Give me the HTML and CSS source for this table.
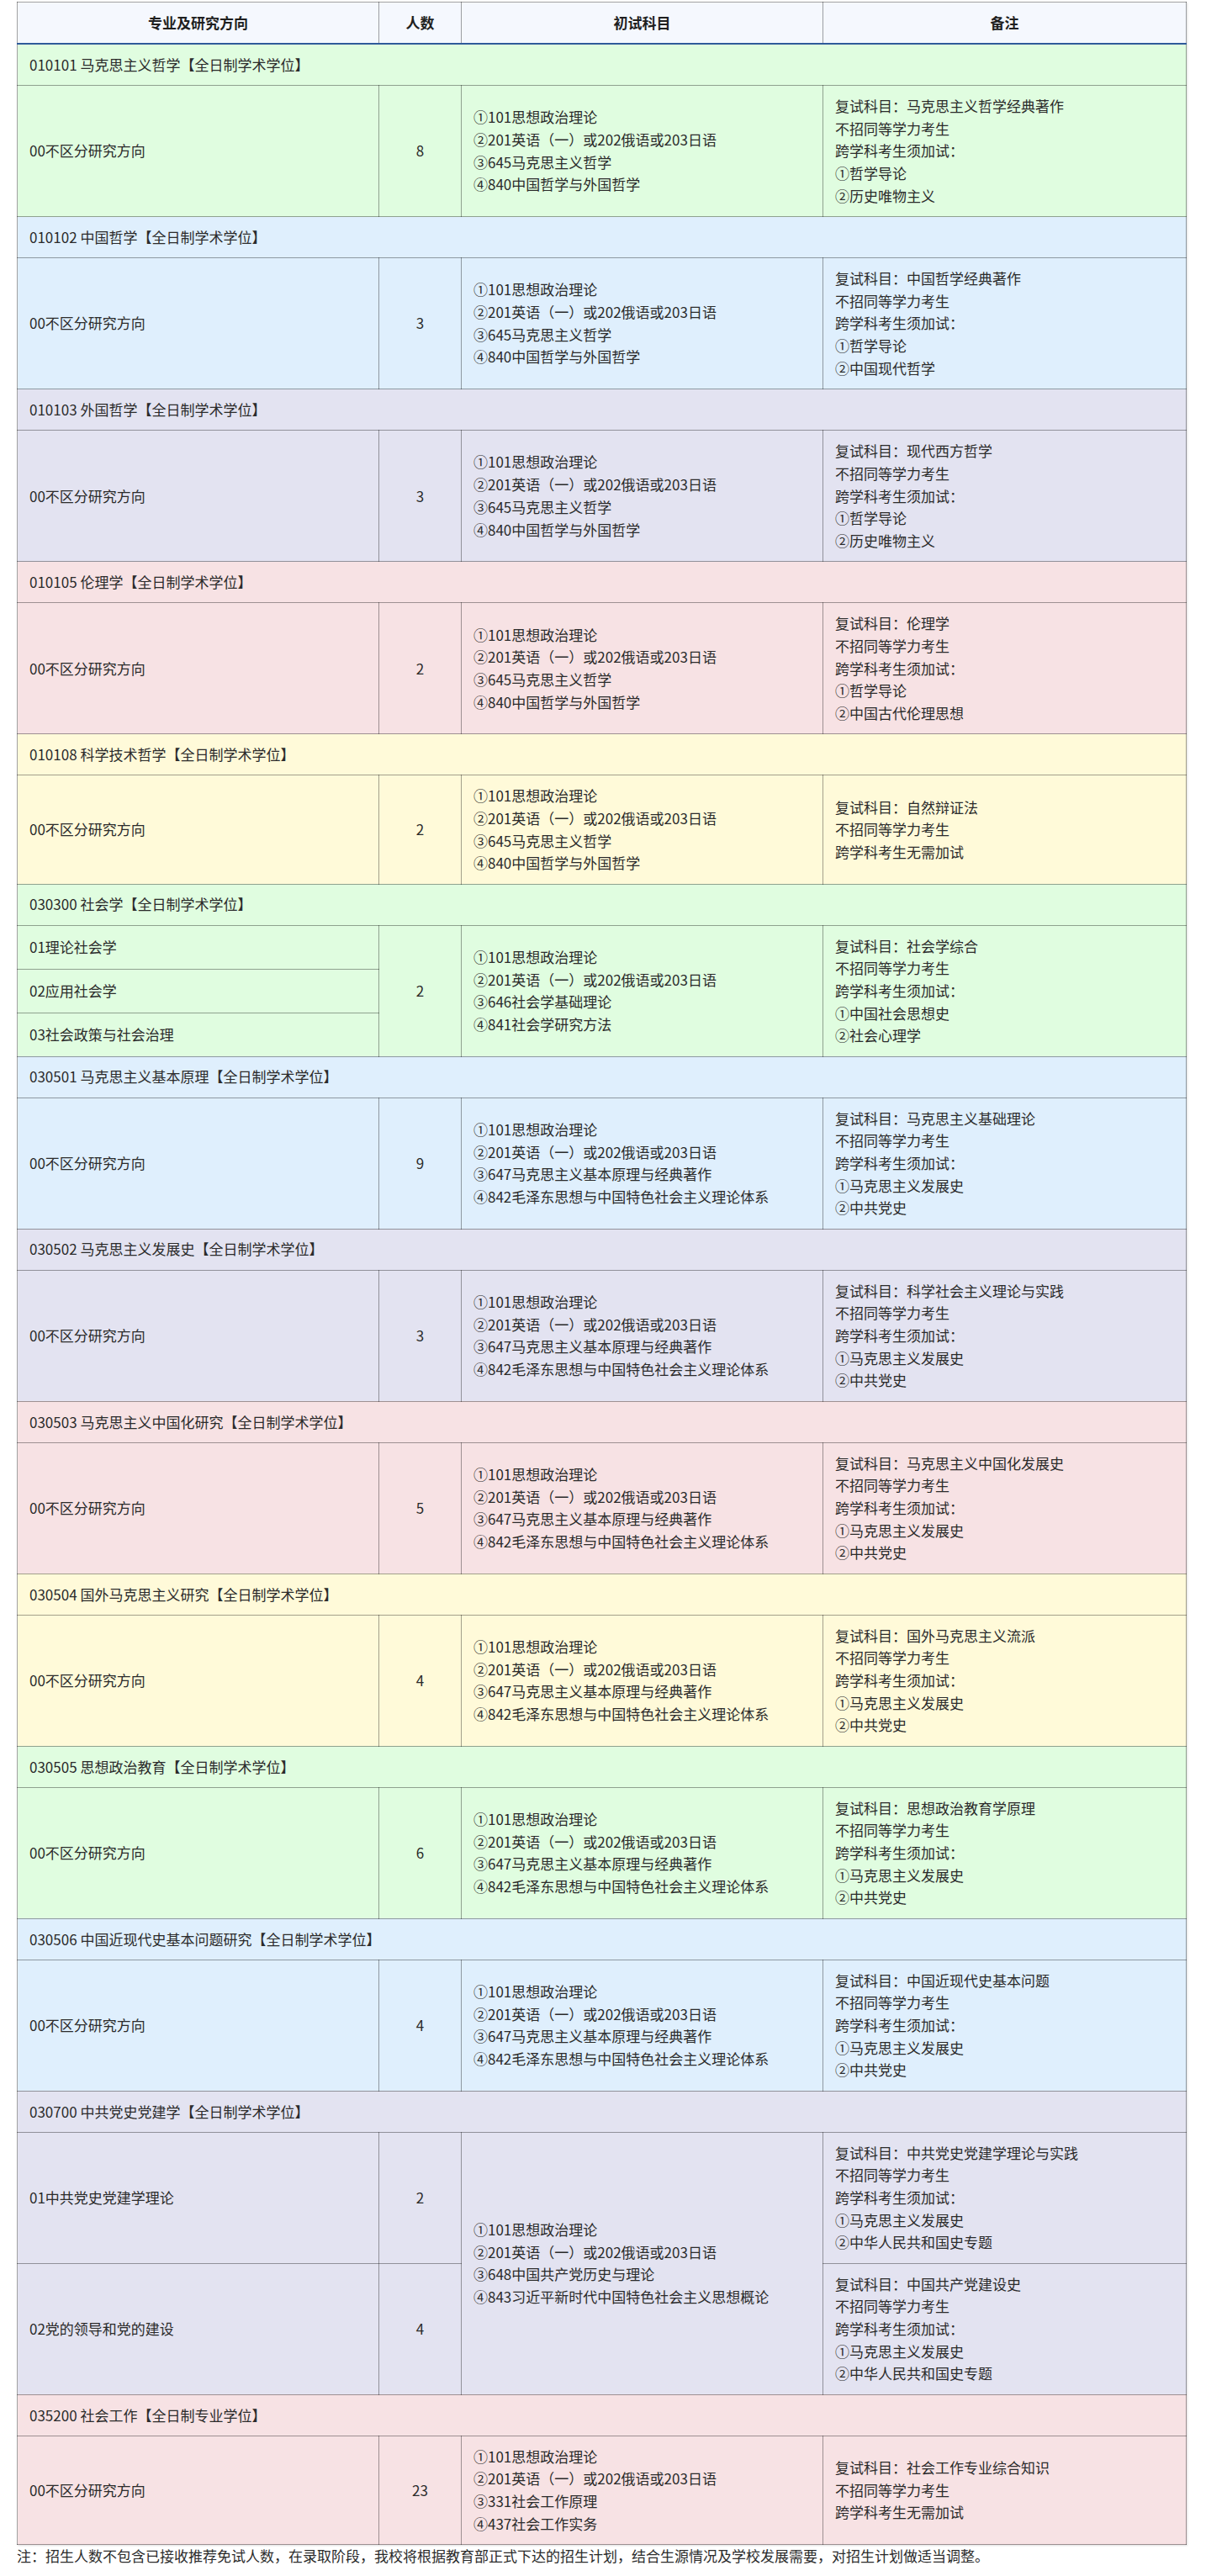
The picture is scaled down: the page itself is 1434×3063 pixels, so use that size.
FILE: index.html
```html
<!DOCTYPE html>
<html lang="zh-CN">
<head>
<meta charset="utf-8">
<title>招生专业目录</title>
<link rel="stylesheet" href="styles.css">
</head>
<body>
<div class="page">
<table class="plan">
<colgroup>
<col class="c-major"><col class="c-num"><col class="c-subj"><col class="c-note">
</colgroup>
<thead>
<tr><th>专业及研究方向</th><th>人数</th><th>初试科目</th><th>备注</th></tr>
</thead>
<tbody class="green">
<tr class="grp"><td colspan="4">010101 马克思主义哲学【全日制学术学位】</td></tr>
<tr><td>00不区分研究方向</td><td class="num">8</td>
<td>①101思想政治理论<br>②201英语（一）或202俄语或203日语<br>③645马克思主义哲学<br>④840中国哲学与外国哲学</td>
<td>复试科目：马克思主义哲学经典著作<br>不招同等学力考生<br>跨学科考生须加试：<br>①哲学导论<br>②历史唯物主义</td></tr>
</tbody>
<tbody class="blue">
<tr class="grp"><td colspan="4">010102 中国哲学【全日制学术学位】</td></tr>
<tr><td>00不区分研究方向</td><td class="num">3</td>
<td>①101思想政治理论<br>②201英语（一）或202俄语或203日语<br>③645马克思主义哲学<br>④840中国哲学与外国哲学</td>
<td>复试科目：中国哲学经典著作<br>不招同等学力考生<br>跨学科考生须加试：<br>①哲学导论<br>②中国现代哲学</td></tr>
</tbody>
<tbody class="lav">
<tr class="grp"><td colspan="4">010103 外国哲学【全日制学术学位】</td></tr>
<tr><td>00不区分研究方向</td><td class="num">3</td>
<td>①101思想政治理论<br>②201英语（一）或202俄语或203日语<br>③645马克思主义哲学<br>④840中国哲学与外国哲学</td>
<td>复试科目：现代西方哲学<br>不招同等学力考生<br>跨学科考生须加试：<br>①哲学导论<br>②历史唯物主义</td></tr>
</tbody>
<tbody class="pink">
<tr class="grp"><td colspan="4">010105 伦理学【全日制学术学位】</td></tr>
<tr><td>00不区分研究方向</td><td class="num">2</td>
<td>①101思想政治理论<br>②201英语（一）或202俄语或203日语<br>③645马克思主义哲学<br>④840中国哲学与外国哲学</td>
<td>复试科目：伦理学<br>不招同等学力考生<br>跨学科考生须加试：<br>①哲学导论<br>②中国古代伦理思想</td></tr>
</tbody>
<tbody class="yellow">
<tr class="grp"><td colspan="4">010108 科学技术哲学【全日制学术学位】</td></tr>
<tr><td>00不区分研究方向</td><td class="num">2</td>
<td>①101思想政治理论<br>②201英语（一）或202俄语或203日语<br>③645马克思主义哲学<br>④840中国哲学与外国哲学</td>
<td>复试科目：自然辩证法<br>不招同等学力考生<br>跨学科考生无需加试</td></tr>
</tbody>
<tbody class="green">
<tr class="grp"><td colspan="4">030300 社会学【全日制学术学位】</td></tr>
<tr><td>01理论社会学</td><td class="num" rowspan="3">2</td>
<td rowspan="3">①101思想政治理论<br>②201英语（一）或202俄语或203日语<br>③646社会学基础理论<br>④841社会学研究方法</td>
<td rowspan="3">复试科目：社会学综合<br>不招同等学力考生<br>跨学科考生须加试：<br>①中国社会思想史<br>②社会心理学</td></tr>
<tr><td>02应用社会学</td></tr>
<tr><td>03社会政策与社会治理</td></tr>
</tbody>
<tbody class="blue">
<tr class="grp"><td colspan="4">030501 马克思主义基本原理【全日制学术学位】</td></tr>
<tr><td>00不区分研究方向</td><td class="num">9</td>
<td>①101思想政治理论<br>②201英语（一）或202俄语或203日语<br>③647马克思主义基本原理与经典著作<br>④842毛泽东思想与中国特色社会主义理论体系</td>
<td>复试科目：马克思主义基础理论<br>不招同等学力考生<br>跨学科考生须加试：<br>①马克思主义发展史<br>②中共党史</td></tr>
</tbody>
<tbody class="lav">
<tr class="grp"><td colspan="4">030502 马克思主义发展史【全日制学术学位】</td></tr>
<tr><td>00不区分研究方向</td><td class="num">3</td>
<td>①101思想政治理论<br>②201英语（一）或202俄语或203日语<br>③647马克思主义基本原理与经典著作<br>④842毛泽东思想与中国特色社会主义理论体系</td>
<td>复试科目：科学社会主义理论与实践<br>不招同等学力考生<br>跨学科考生须加试：<br>①马克思主义发展史<br>②中共党史</td></tr>
</tbody>
<tbody class="pink">
<tr class="grp"><td colspan="4">030503 马克思主义中国化研究【全日制学术学位】</td></tr>
<tr><td>00不区分研究方向</td><td class="num">5</td>
<td>①101思想政治理论<br>②201英语（一）或202俄语或203日语<br>③647马克思主义基本原理与经典著作<br>④842毛泽东思想与中国特色社会主义理论体系</td>
<td>复试科目：马克思主义中国化发展史<br>不招同等学力考生<br>跨学科考生须加试：<br>①马克思主义发展史<br>②中共党史</td></tr>
</tbody>
<tbody class="yellow">
<tr class="grp"><td colspan="4">030504 国外马克思主义研究【全日制学术学位】</td></tr>
<tr><td>00不区分研究方向</td><td class="num">4</td>
<td>①101思想政治理论<br>②201英语（一）或202俄语或203日语<br>③647马克思主义基本原理与经典著作<br>④842毛泽东思想与中国特色社会主义理论体系</td>
<td>复试科目：国外马克思主义流派<br>不招同等学力考生<br>跨学科考生须加试：<br>①马克思主义发展史<br>②中共党史</td></tr>
</tbody>
<tbody class="green">
<tr class="grp"><td colspan="4">030505 思想政治教育【全日制学术学位】</td></tr>
<tr><td>00不区分研究方向</td><td class="num">6</td>
<td>①101思想政治理论<br>②201英语（一）或202俄语或203日语<br>③647马克思主义基本原理与经典著作<br>④842毛泽东思想与中国特色社会主义理论体系</td>
<td>复试科目：思想政治教育学原理<br>不招同等学力考生<br>跨学科考生须加试：<br>①马克思主义发展史<br>②中共党史</td></tr>
</tbody>
<tbody class="blue">
<tr class="grp"><td colspan="4">030506 中国近现代史基本问题研究【全日制学术学位】</td></tr>
<tr><td>00不区分研究方向</td><td class="num">4</td>
<td>①101思想政治理论<br>②201英语（一）或202俄语或203日语<br>③647马克思主义基本原理与经典著作<br>④842毛泽东思想与中国特色社会主义理论体系</td>
<td>复试科目：中国近现代史基本问题<br>不招同等学力考生<br>跨学科考生须加试：<br>①马克思主义发展史<br>②中共党史</td></tr>
</tbody>
<tbody class="lav">
<tr class="grp"><td colspan="4">030700 中共党史党建学【全日制学术学位】</td></tr>
<tr><td>01中共党史党建学理论</td><td class="num">2</td>
<td rowspan="2">①101思想政治理论<br>②201英语（一）或202俄语或203日语<br>③648中国共产党历史与理论<br>④843习近平新时代中国特色社会主义思想概论</td>
<td>复试科目：中共党史党建学理论与实践<br>不招同等学力考生<br>跨学科考生须加试：<br>①马克思主义发展史<br>②中华人民共和国史专题</td></tr>
<tr><td>02党的领导和党的建设</td><td class="num">4</td>
<td>复试科目：中国共产党建设史<br>不招同等学力考生<br>跨学科考生须加试：<br>①马克思主义发展史<br>②中华人民共和国史专题</td></tr>
</tbody>
<tbody class="pink">
<tr class="grp"><td colspan="4">035200 社会工作【全日制专业学位】</td></tr>
<tr><td>00不区分研究方向</td><td class="num">23</td>
<td>①101思想政治理论<br>②201英语（一）或202俄语或203日语<br>③331社会工作原理<br>④437社会工作实务</td>
<td>复试科目：社会工作专业综合知识<br>不招同等学力考生<br>跨学科考生无需加试</td></tr>
</tbody>
</table>
<p class="note">注：招生人数不包含已接收推荐免试人数，在录取阶段，我校将根据教育部正式下达的招生计划，结合生源情况及学校发展需要，对招生计划做适当调整。</p>
</div>
</body>
</html>
```

FILE: styles.css
```css
html, body {
  margin: 0;
  padding: 0;
  background: #ffffff;
}

body {
  font-family: "Noto Sans CJK SC", "Noto Sans", "Liberation Sans", sans-serif;
  font-size: 17px;
  line-height: 26.67px;
  color: #2b2b2b;
}

.page {
  padding: 2px 20px 0 20px;
}

.plan {
  width: 1390px;
  table-layout: fixed;
  border-collapse: collapse;
  border: 1px solid #a8a8ae;
  box-shadow: 1px 1px 2px rgba(0, 0, 0, 0.12);
}

.c-major { width: 430px; }
.c-num { width: 98px; }
.c-subj { width: 430px; }
.c-note { width: 432px; }

.plan th,
.plan td {
  border: 1px solid rgba(0, 0, 0, 0.36);
  padding: 10.75px 14px;
  vertical-align: middle;
  text-align: left;
  font-weight: normal;
}

.plan thead th {
  background: #f5f8fe;
  font-weight: bold;
  text-align: center;
  color: #1f1f1f;
  border-bottom: 2px solid #2f5a9a;
}

.plan td.num {
  text-align: center;
}

.green td { background: #e0fde0; }
.blue td { background: #dfeffd; }
.lav td { background: #e3e3f1; }
.pink td { background: #f7e2e4; }
.yellow td { background: #fffad9; }

.note {
  margin: 0;
  padding: 0;
  font-size: 17px;
  line-height: 26.67px;
  color: #2b2b2b;
}
```
